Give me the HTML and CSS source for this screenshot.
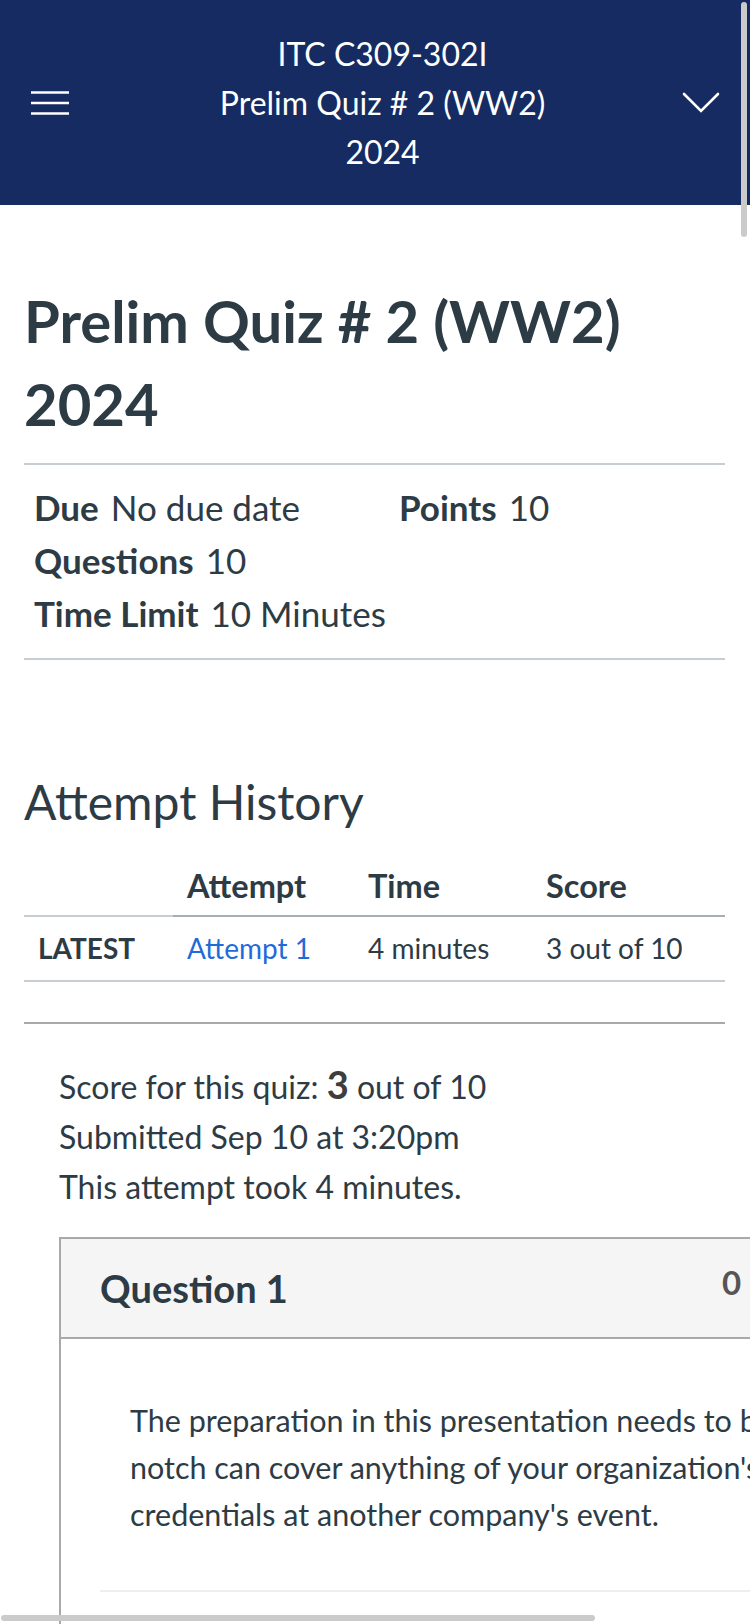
FILE: index.html
```html
<!DOCTYPE html>
<html lang="en">
<head>
<meta charset="utf-8">
<title>Prelim Quiz # 2 (WW2) 2024</title>
<link rel="stylesheet" href="styles.css">
</head>
<body>
<div class="page">
  <header class="topbar">
    <button class="icon-btn menu" aria-label="Menu">
      <svg width="38" height="24" viewBox="0 0 38 24"><g stroke="#fff" stroke-width="2.6"><line x1="0" y1="1.5" x2="38" y2="1.5"/><line x1="0" y1="12" x2="38" y2="12"/><line x1="0" y1="22.5" x2="38" y2="22.5"/></g></svg>
    </button>
    <div class="topbar-title">
      <div>ITC C309-302I</div>
      <div>Prelim Quiz # 2 (WW2)</div>
      <div>2024</div>
    </div>
    <button class="icon-btn chevron" aria-label="More">
      <svg width="38" height="22" viewBox="0 0 38 22"><polyline points="2,2 19,19 36,2" fill="none" stroke="#fff" stroke-width="2.6" stroke-linecap="round" stroke-linejoin="miter"/></svg>
    </button>
  </header>

  <main class="content">
    <h1 class="quiz-title">Prelim Quiz # 2 (WW2) 2024</h1>

    <div class="details">
      <div class="detail"><span class="label">Due</span><span class="value">No due date</span></div>
      <div class="detail"><span class="label">Points</span><span class="value">10</span></div>
      <div class="detail"><span class="label">Questions</span><span class="value">10</span></div>
      <div class="detail"></div>
      <div class="detail"><span class="label">Time Limit</span><span class="value">10 Minutes</span></div>
    </div>

    <h2 class="section-title">Attempt History</h2>

    <div class="history">
      <div class="th th-first"></div>
      <div class="th">Attempt</div>
      <div class="th">Time</div>
      <div class="th">Score</div>
      <div class="td td-first">LATEST</div>
      <div class="td"><a class="link" href="#">Attempt 1</a></div>
      <div class="td">4 minutes</div>
      <div class="td">3 out of 10</div>
    </div>

    <div class="divider"></div>

    <div class="summary">
      <div>Score for this quiz: <span class="score-num">3</span> out of 10</div>
      <div>Submitted Sep 10 at 3:20pm</div>
      <div>This attempt took 4 minutes.</div>
    </div>

    <section class="question">
      <div class="question-head">
        <h3 class="question-title">Question 1</h3>
        <span class="question-points">0 / 1 pts</span>
      </div>
      <div class="question-body">
        <p class="question-text">The preparation in this presentation needs to be top<br>notch can cover anything of your organization's<br>credentials at another company's event.</p>
        <div class="answers-rule"></div>
      </div>
    </section>
  </main>

  <div class="vscroll"></div>
  <div class="hscroll"></div>
</div>
</body>
</html>
```
FILE: styles.css
```css
html, body {
  margin: 0;
  padding: 0;
  overflow: hidden;
  background: #fff;
}
body {
  font-family: Lato, "Open Sans", Arial, sans-serif;
  color: #2d3b45;
}
.page {
  position: relative;
  width: 750px;
  height: 1624px;
  overflow: hidden;
}
.topbar {
  height: 205px;
  background: #152b62;
  display: flex;
  align-items: center;
  box-sizing: border-box;
  padding: 0 30px 0 31px;
}
.icon-btn {
  background: none;
  border: 0;
  padding: 0;
  display: flex;
  margin: 0;
}
.menu { width: 38px; }
.chevron { width: 38px; }
.topbar-title {
  flex: 1;
  text-align: center;
  color: #fff;
  font-size: 32px;
  line-height: 49px;
  padding-left: 14px;
}
.content {
  padding: 0 25px 0 24px;
}
.quiz-title {
  margin: 74px 0 0;
  font-size: 58px;
  line-height: 83px;
  font-weight: 700;
  padding-bottom: 18px;
  border-bottom: 2px solid #c7cdd1;
}
.details {
  display: grid;
  grid-template-columns: 365px 1fr;
  padding: 16px 10px 18px;
  border-bottom: 2px solid #c7cdd1;
  font-size: 35px;
  line-height: 53px;
}
.detail { display: flex; gap: 12px; }
.label { font-weight: 700; }
.section-title {
  margin: 114px 0 0;
  font-size: 48px;
  line-height: 56px;
  font-weight: 400;
}
.history {
  margin-top: 27px;
  display: grid;
  grid-template-columns: 149px 181px 178px 1fr;
}
.th {
  height: 58px;
  font-size: 32.5px;
  font-weight: 700;
  line-height: 58px;
  padding-left: 14px;
  border-bottom: 2px solid #a5afb5;
}
.th-first { border-bottom-color: #c7cdd1; }
.td {
  height: 63px;
  font-size: 28px;
  line-height: 63px;
  padding-left: 14px;
  border-bottom: 2px solid #c7cdd1;
}
.td-first {
  font-weight: 700;
  font-size: 28px;
}
.link {
  color: #1f6cd8;
  text-decoration: none;
}
.divider {
  margin-top: 40px;
  height: 2px;
  background: #a7a9ab;
}
.summary {
  margin: 35px 0 0 35px;
  font-size: 32px;
  line-height: 50px;
}
.score-num {
  font-size: 38px;
  font-weight: 700;
  color: #3d3d3d;
}
.question {
  margin: 25px 0 0 35px;
  width: 1000px;
  border: 2px solid #a9a9a9;
  border-right: 0;
  border-bottom: 0;
}
.question-head {
  height: 98px;
  background: #f5f5f5;
  border-bottom: 2px solid #a9a9a9;
  display: flex;
  align-items: center;
  position: relative;
}
.question-title {
  margin: 0 0 0 39px;
  font-size: 38px;
  font-weight: 700;
  line-height: 40px;
}
.question-points {
  position: absolute;
  left: 661px;
  top: 23px;
  font-size: 33px;
  font-weight: 700;
  color: #555;
  word-spacing: 4px;
}
.question-body {
  padding: 58px 0 0 39px;
  height: 300px;
}
.question-text {
  margin: 0 0 0 30px;
  font-size: 30.5px;
  line-height: 47px;
  white-space: nowrap;
}
.answers-rule {
  margin-top: 52px;
  height: 2px;
  background: #eceeef;
}
.vscroll {
  position: absolute;
  right: 3px;
  top: 2px;
  width: 6px;
  height: 235px;
  border-radius: 3px;
  background: #cbcbcb;
}
.hscroll {
  position: absolute;
  left: 1px;
  bottom: 3px;
  width: 594px;
  height: 6px;
  border-radius: 3px;
  background: #cbcbcb;
}
```
